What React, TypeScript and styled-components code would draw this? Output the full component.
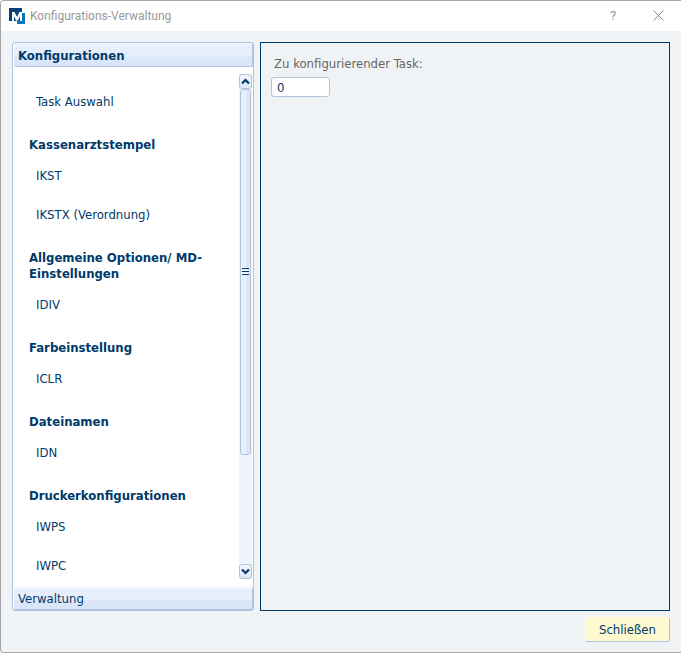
import React, { useState } from "react";
import styled, { createGlobalStyle } from "styled-components";

const NAVY = "#003a6a";
const LINE = "#b0c4de";

const GlobalStyle = createGlobalStyle`
  *, *::before, *::after { box-sizing: border-box; }
  body { margin: 0; background: #fff; }
  button, input { font: inherit; color: inherit; }
`;

const Window = styled.div`
  display: flex;
  flex-direction: column;
  min-height: 100vh;
  border: 1px solid #a6a6a6;
  border-right: 0;
  border-radius: 4px 0 0 4px;
  background: #f0f3f6;
  color: ${NAVY};
  font: 13px/16px Tahoma, "DejaVu Sans Condensed", "DejaVu Sans", sans-serif;
  overflow: hidden;
`;

const TitleBar = styled.header`
  display: flex;
  align-items: center;
  height: 30px;
  padding-left: 8px;
  background: #fff;
  color: #999;
  font: 12px/16px "Segoe UI", Roboto, sans-serif;
`;

const Title = styled.h1`
  flex: 1;
  margin: 0 0 0 5px;
  font: inherit;
`;

const CaptionButton = styled.button`
  display: grid;
  place-items: center;
  width: 45px;
  height: 30px;
  padding: 0 1px 1px 0;
  border: 0;
  background: none;
  font-size: 13px;
`;

const Body = styled.div`
  flex: 1;
  display: grid;
  grid-template-columns: 242px minmax(0, 1fr);
  gap: 6px;
  padding: 11px 11px 6px;
`;

const Sidebar = styled.aside`
  display: flex;
  flex-direction: column;
  border: 1px solid ${LINE};
  border-radius: 3px;
  background: #fff;
`;

const SectionButton = styled.button<{ $open?: boolean }>`
  height: ${(p) => (p.$open ? 24 : 23)}px;
  margin-left: 1px;
  padding: 2px 4px 0;
  border: 0;
  border-right: 1px solid ${LINE};
  border-bottom: 1px solid ${LINE};
  border-radius: 2px;
  background: linear-gradient(#f1f6fe 0, #e7effd 20%, #e6eefc 58%, #dbe7f9 62%, #d9e5f8 100%);
  font-weight: ${(p) => (p.$open ? 700 : 400)};
  text-align: left;
`;

const SectionContent = styled.div`
  flex: 1;
  display: flex;
  justify-content: space-between;
  padding: 7px 1px 8px 0;
`;

const Nav = styled.nav`
  display: flex;
  flex-direction: column;
  gap: 27px;
  padding: 20px 16px 5px;
`;

const GroupTitle = styled.h2`
  margin: 0 0 15px;
  font-size: 13px;
  line-height: 16px;
  font-weight: 700;
`;

const List = styled.ul`
  display: flex;
  flex-direction: column;
  gap: 23px;
  margin: 0;
  padding: 0 0 0 7px;
  list-style: none;
`;

const NavLink = styled.a`
  display: block;
  color: inherit;
  text-decoration: none;
`;

const ScrollBar = styled.div`
  flex: none;
  display: flex;
  flex-direction: column;
  width: 13px;
  background: #eef5fd;
`;

const ArrowButton = styled.button`
  flex: none;
  display: grid;
  place-items: center;
  height: 15px;
  padding: 0;
  border: 1px solid ${LINE};
  border-radius: 3px;
  background: linear-gradient(#f1f6fe, #dbe7f9);
`;

const Track = styled.div`
  flex: 1;
  padding: 0 1px;
`;

const Thumb = styled.div`
  display: grid;
  place-items: center;
  height: 77%;
  border: 1px solid ${LINE};
  border-radius: 3px;
  background: linear-gradient(to right, #e6eefc 0, #e9f1fe 55%, #dbe7f9 60%, #dbe7f9 100%);
`;

const Panel = styled.main`
  padding: 13px 10px;
  border: 1px solid ${NAVY};
`;

const FieldLabel = styled.label`
  display: block;
  margin: 0 0 5px 3px;
  color: #666;
`;

const TextInput = styled.input`
  display: block;
  width: 59px;
  height: 20px;
  padding: 0 5px;
  border: 1px solid ${LINE};
  border-radius: 3px;
  background: #fff;
`;

const Footer = styled.footer`
  display: flex;
  justify-content: flex-end;
  padding: 0 11px 10px;
`;

const CloseButton = styled.button`
  width: 85px;
  height: 25px;
  padding: 0;
  border: 1px solid;
  border-color: #fff9d0 ${LINE} ${LINE} #fff9d0;
  border-radius: 3px;
  background: #fff9d0;
`;

type Group = { title?: string; items: string[] };

const groups: Group[] = [
  { items: ["Task Auswahl"] },
  { title: "Kassenarztstempel", items: ["IKST", "IKSTX (Verordnung)"] },
  { title: "Allgemeine Optionen/ MD-Einstellungen", items: ["IDIV"] },
  { title: "Farbeinstellung", items: ["ICLR"] },
  { title: "Dateinamen", items: ["IDN"] },
  { title: "Druckerkonfigurationen", items: ["IWPS", "IWPC"] },
];

const Logo = () => (
  <svg width="16" height="16" viewBox="0 0 16 16" aria-hidden="true">
    <path d="M0 0h13v4H3v9H0z" fill="#063f72" />
    <path d="M3 3h10v10H3z" fill="#0b4a80" />
    <path d="M13 5h3v11H8v-3h5z" fill="#0879bd" />
    <path d="M3 13V4h2.500L8 9l2.500-5H13v9h-2V8l-2 4.500H7L5 8v5z" fill="#fff" />
  </svg>
);

const Chevron = ({ down }: { down?: boolean }) => (
  <svg width="9" height="7" viewBox="0 0 9 7" aria-hidden="true">
    <path d={down ? "M1 1.5l3.5 3.5L8 1.5" : "M1 5.5L4.5 2 8 5.5"} fill="none" stroke={NAVY} strokeWidth="2.2" />
  </svg>
);

export default function App() {
  const [task, setTask] = useState("0");
  return (
    <>
      <GlobalStyle />
      <Window>
        <TitleBar>
          <Logo />
          <Title>Konfigurations-Verwaltung</Title>
          <CaptionButton aria-label="Hilfe">?</CaptionButton>
          <CaptionButton aria-label="Fenster schließen">
            <svg width="11" height="11" viewBox="0 0 11 11" aria-hidden="true">
              <path d="M.5.5l10 10M10.5.5l-10 10" stroke="#8c8c8c" />
            </svg>
          </CaptionButton>
        </TitleBar>
        <Body>
          <Sidebar>
            <SectionButton $open aria-expanded="true">Konfigurationen</SectionButton>
            <SectionContent>
              <Nav>
                {groups.map((group) => (
                  <section key={group.items[0]}>
                    {group.title && <GroupTitle>{group.title}</GroupTitle>}
                    <List>
                      {group.items.map((item) => (
                        <li key={item}>
                          <NavLink href="#">{item}</NavLink>
                        </li>
                      ))}
                    </List>
                  </section>
                ))}
              </Nav>
              <ScrollBar>
                <ArrowButton aria-label="Nach oben"><Chevron /></ArrowButton>
                <Track>
                  <Thumb>
                    <svg width="9" height="9" viewBox="0 0 9 9" aria-hidden="true">
                      <path d="M1 1.5h7M1 4.5h7M1 7.5h7" stroke={NAVY} />
                      <path d="M0 .5h7M0 3.5h7M0 6.5h7" stroke="#fff" />
                    </svg>
                  </Thumb>
                </Track>
                <ArrowButton aria-label="Nach unten"><Chevron down /></ArrowButton>
              </ScrollBar>
            </SectionContent>
            <SectionButton aria-expanded="false">Verwaltung</SectionButton>
          </Sidebar>
          <Panel>
            <FieldLabel htmlFor="task">Zu konfigurierender Task:</FieldLabel>
            <TextInput id="task" value={task} onChange={(e) => setTask(e.target.value)} />
          </Panel>
        </Body>
        <Footer>
          <CloseButton>Schließen</CloseButton>
        </Footer>
      </Window>
    </>
  );
}
